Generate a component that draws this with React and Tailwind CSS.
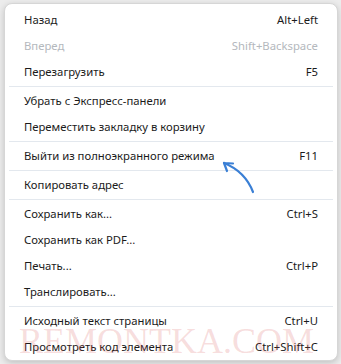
const groups = [
  [
    { label: "Назад", key: "Alt+Left" },
    { label: "Вперед", key: "Shift+Backspace", disabled: true },
    { label: "Перезагрузить", key: "F5" },
  ],
  [
    { label: "Убрать с Экспресс-панели" },
    { label: "Переместить закладку в корзину" },
  ],
  [{ label: "Выйти из полноэкранного режима", key: "F11" }],
  [{ label: "Копировать адрес" }],
  [
    { label: "Сохранить как...", key: "Ctrl+S" },
    { label: "Сохранить как PDF..." },
    { label: "Печать...", key: "Ctrl+P" },
    { label: "Транслировать..." },
  ],
  [
    { label: "Исходный текст страницы", key: "Ctrl+U" },
    { label: "Просмотреть код элемента", key: "Ctrl+Shift+C" },
  ],
];

const Row = ({ label, shortcut, disabled }) => (
  <div
    className={`flex h-[26px] items-center justify-between pl-[19px] pr-[19px] ${
      disabled ? "text-[#b4b8bd]" : "text-[#1b1b1b]"
    }`}
  >
    <span>{label}</span>
    {shortcut && <span>{shortcut}</span>}
  </div>
);

const App = () => {
  return (
    <div
      className="relative h-[364px] w-[341px] overflow-hidden bg-[#ececec] pt-[3px] pl-[4px]"
      style={{ fontFamily: '"Noto Sans", sans-serif' }}
    >
      <div className="relative w-[334px] rounded-[8px] border border-[#d6d6d6] bg-white pt-[3px] text-[11.3px] leading-none shadow-[0_2px_6px_rgba(0,0,0,0.18)]">
        {groups.map((items, gi) => (
          <div key={gi}>
            {gi > 0 && <div className="mx-[4px] my-[1px] h-px bg-[#e3e8ee]" />}
            {items.map((it) => (
              <Row
                key={it.label}
                label={it.label}
                shortcut={it.key}
                disabled={it.disabled}
              />
            ))}
          </div>
        ))}

        {/* blue arrow pointing at the F11 item */}
        <svg
          className="absolute left-[210px] top-[151px]"
          width="50"
          height="42"
          viewBox="0 0 50 42"
          fill="none"
          stroke="#3a7fd5"
          strokeWidth="2.2"
          strokeLinecap="round"
          strokeLinejoin="round"
        >
          <path d="M38 37 C33 24 24 14 9 8" />
          <path d="M9 8 L18 8.5 M9 8 L12 16" />
        </svg>

        {/* watermark */}
        <div
          className="pointer-events-none absolute left-[14px] top-[324px] text-[36px] leading-[26px] text-[rgba(214,80,80,0.2)]"
          style={{ fontFamily: '"Liberation Serif", serif' }}
        >
          REMONTKA.COM
        </div>
      </div>
    </div>
  );
};

export default App;
